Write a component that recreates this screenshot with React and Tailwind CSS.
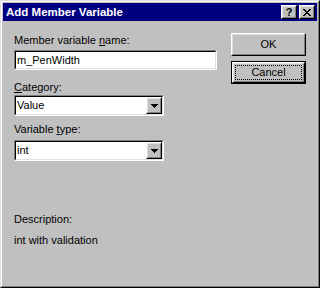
import React from "react";

const font = { fontFamily: '"Liberation Sans", Arial, sans-serif' };

function Raised({ className = "", children }) {
  return (
    <div className={"border border-t-white border-l-white border-r-black border-b-black " + className}>
      <div className="w-full h-full border border-t-[#dfdfdf] border-l-[#dfdfdf] border-r-[#808080] border-b-[#808080] bg-[#c0c0c0] flex items-center justify-center">
        {children}
      </div>
    </div>
  );
}

function Sunken({ className = "", children }) {
  return (
    <div className={"border border-t-[#808080] border-l-[#808080] border-r-white border-b-white " + className}>
      <div className="w-full h-full border border-t-black border-l-black border-r-[#dfdfdf] border-b-[#dfdfdf] bg-white flex items-center">
        {children}
      </div>
    </div>
  );
}

function Combo({ value }) {
  return (
    <Sunken className="w-[150px] h-[21px]">
      <span className="flex-1 pl-px text-[11px] leading-[13px] text-black">{value}</span>
      <Raised className="w-[16px] h-full">
        <svg width="7" height="4" viewBox="0 0 7 4" shapeRendering="crispEdges">
          <rect x="0" y="0" width="7" height="1" fill="#000" />
          <rect x="1" y="1" width="5" height="1" fill="#000" />
          <rect x="2" y="2" width="3" height="1" fill="#000" />
          <rect x="3" y="3" width="1" height="1" fill="#000" />
        </svg>
      </Raised>
    </Sunken>
  );
}

function CloseGlyph() {
  const rows = ["XX....XX", ".XX..XX.", "..XXXX..", "...XX...", "..XXXX..", ".XX..XX.", "XX....XX"];
  return (
    <svg width="8" height="7" viewBox="0 0 8 7" shapeRendering="crispEdges">
      {rows.map((r, y) =>
        r.split("").map((c, x) => (c === "X" ? <rect key={x + "-" + y} x={x} y={y} width="1" height="1" fill="#000" /> : null))
      )}
    </svg>
  );
}

export default function App() {
  return (
    <div style={font} className="w-[320px] h-[288px] border border-t-[#dfdfdf] border-l-[#dfdfdf] border-r-black border-b-black">
      <div className="w-full h-full border border-t-white border-l-white border-r-[#808080] border-b-[#808080] bg-[#c0c0c0] p-px flex flex-col">
        <div className="h-[18px] bg-[#000080] flex items-center pl-[3px] pr-[2px]">
          <span className="flex-1 text-white font-bold text-[11.5px] leading-[13px]">Add Member Variable</span>
          <Raised className="w-[16px] h-[14px]">
            <span className="text-black font-bold text-[11px] leading-[11px]">?</span>
          </Raised>
          <Raised className="w-[16px] h-[14px] ml-[2px]">
            <CloseGlyph />
          </Raised>
        </div>
        <div className="flex flex-row pl-[11px] text-[11px] leading-[13px] text-black">
          <div className="flex flex-col w-[203px]">
            <div className="mt-[13px] h-[13px]">
              Member variable <span className="underline">n</span>ame:
            </div>
            <Sunken className="mt-[3px] w-[203px] h-[20px]">
              <span className="pl-px">m_PenWidth</span>
            </Sunken>
            <div className="mt-[11px] h-[13px]">
              <span className="underline">C</span>ategory:
            </div>
            <div className="mt-px">
              <Combo value="Value" />
            </div>
            <div className="mt-[7px] h-[13px]">
              Variable <span className="underline">t</span>ype:
            </div>
            <div className="mt-[4px]">
              <Combo value="int" />
            </div>
            <div className="mt-[52px] h-[13px]">Description:</div>
            <div className="mt-[8px] h-[13px]">int with validation</div>
          </div>
          <div className="flex flex-col ml-[14px]">
            <Raised className="mt-[12px] w-[75px] h-[23px]">
              <span>OK</span>
            </Raised>
            <div className="mt-[5px] w-[75px] h-[23px] border border-black">
              <div className="relative w-full h-full border border-t-white border-l-white border-r-black border-b-black">
                <div className="w-full h-full border border-t-[#dfdfdf] border-l-[#dfdfdf] border-r-[#808080] border-b-[#808080] flex items-center justify-center">
                  <span>Cancel</span>
                </div>
                <div className="absolute inset-[2px] border border-dotted border-black" />
              </div>
            </div>
          </div>
        </div>
      </div>
    </div>
  );
}
